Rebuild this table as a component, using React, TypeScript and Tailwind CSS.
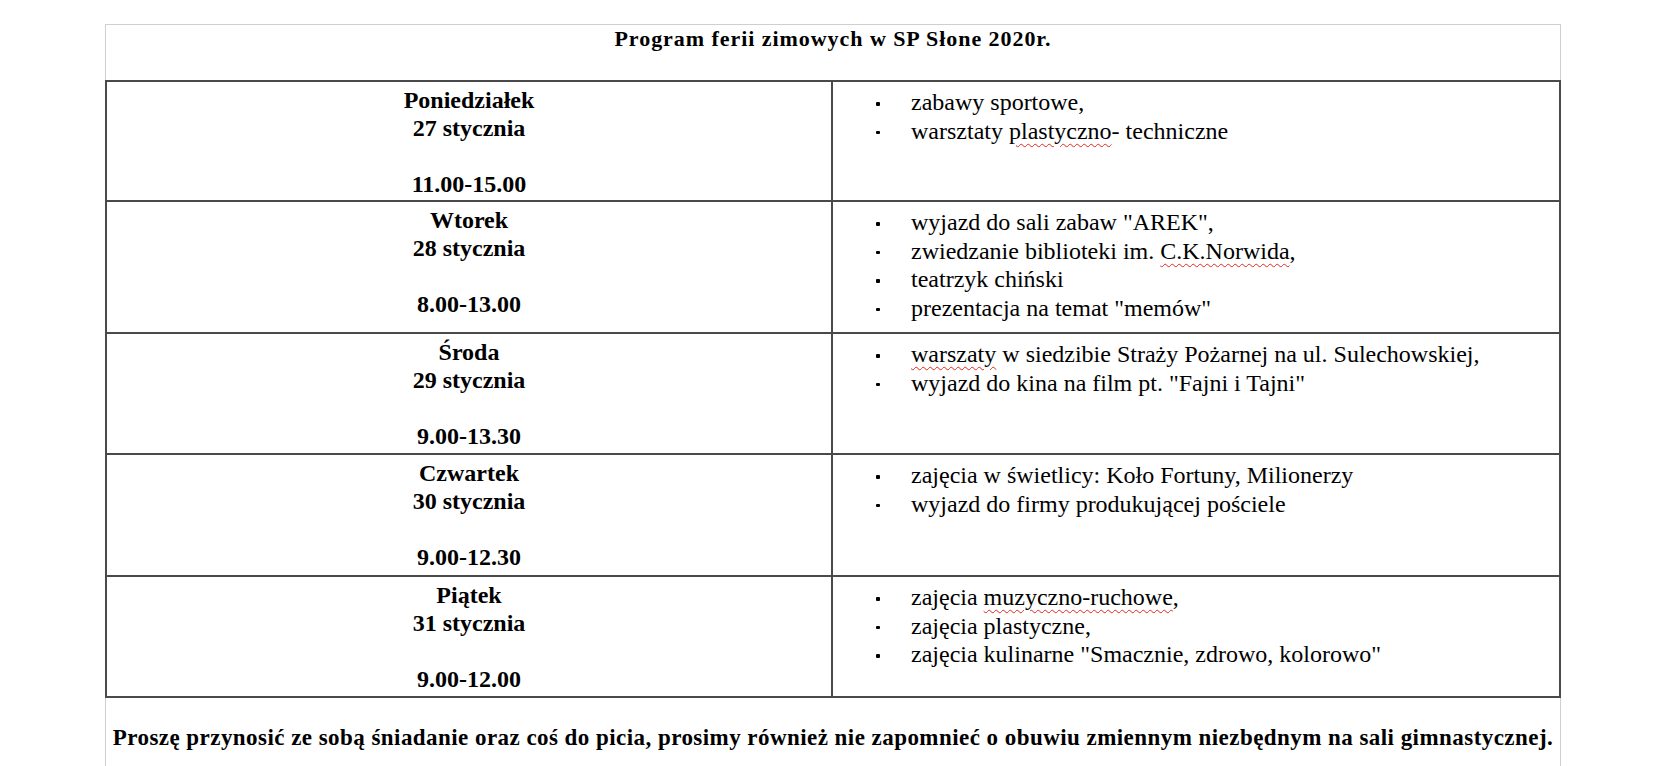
import React from "react";

// red squiggle the word processor draws under words it does not know
const Typo: React.FC<{ children: React.ReactNode }> = ({ children }) => (
  <span className="underline decoration-wavy decoration-[#e3281f] decoration-1 underline-offset-[4px]">
    {children}
  </span>
);

type Day = {
  day: string;
  date: string;
  time: string;
  height: string;
  items: React.ReactNode[];
};

const days: Day[] = [
  {
    day: "Poniedziałek",
    date: "27 stycznia",
    time: "11.00-15.00",
    height: "h-[120px] border-b-2",
    items: [
      "zabawy sportowe,",
      <>
        warsztaty <Typo>plastyczno</Typo>- techniczne
      </>,
    ],
  },
  {
    day: "Wtorek",
    date: "28 stycznia",
    time: "8.00-13.00",
    height: "h-[132px] border-b-2",
    items: [
      'wyjazd do sali zabaw "AREK",',
      <>
        zwiedzanie biblioteki im. <Typo>C.K.Norwida</Typo>,
      </>,
      "teatrzyk chiński",
      'prezentacja na temat "memów"',
    ],
  },
  {
    day: "Środa",
    date: "29 stycznia",
    time: "9.00-13.30",
    height: "h-[121px] border-b-2",
    items: [
      <>
        <Typo>warszaty</Typo> w siedzibie Straży Pożarnej na ul. Sulechowskiej,
      </>,
      'wyjazd do kina na film pt. "Fajni i Tajni"',
    ],
  },
  {
    day: "Czwartek",
    date: "30 stycznia",
    time: "9.00-12.30",
    height: "h-[122px] border-b-2",
    items: [
      "zajęcia w świetlicy: Koło Fortuny, Milionerzy",
      "wyjazd do firmy produkującej pościele",
    ],
  },
  {
    day: "Piątek",
    date: "31 stycznia",
    time: "9.00-12.00",
    height: "h-[119px]",
    items: [
      <>
        zajęcia <Typo>muzyczno-ruchowe</Typo>,
      </>,
      "zajęcia plastyczne,",
      'zajęcia kulinarne "Smacznie, zdrowo, kolorowo"',
    ],
  },
];

const DayRow: React.FC<{ d: Day }> = ({ d }) => (
  <div className={`grid grid-cols-2 border-[#4a4a4a] ${d.height}`}>
    <div className="border-r-2 border-[#4a4a4a] pt-[4px] text-center text-[24px] font-bold leading-[28px]">
      <div>{d.day}</div>
      <div>{d.date}</div>
      <div>&nbsp;</div>
      <div>{d.time}</div>
    </div>
    <ul className="pl-[43px] pt-[6px] text-[24px] leading-[28.6px]">
      {d.items.map((item, i) => (
        <li key={i} className="flex">
          <span className="flex w-[35px] shrink-0 items-start">
            <span className="mt-[14px] h-[3.5px] w-[3.5px] rounded-[1px] bg-black" />
          </span>
          <span>{item}</span>
        </li>
      ))}
    </ul>
  </div>
);

export default function App() {
  return (
    <div className="min-h-screen bg-white pt-[24px] font-['Liberation_Serif','Times_New_Roman',serif] text-black">
      <div className="ml-[105px] w-[1456px] border-x border-t border-[#cfcfcf]">
        <div className="h-[55px] pt-[1px] text-center text-[22px] font-bold leading-[26px] tracking-[0.95px]">
          Program ferii zimowych w SP Słone 2020r.
        </div>
        <div className="-mx-px border-2 border-[#4a4a4a]">
          {days.map((d) => (
            <DayRow key={d.day} d={d} />
          ))}
        </div>
        <div className="h-[70px] pt-[27px] text-center text-[23px] font-bold leading-[26px] tracking-[0.45px]">
          Proszę przynosić ze sobą śniadanie oraz coś do picia, prosimy również nie zapomnieć o obuwiu zmiennym
          niezbędnym na sali gimnastycznej.
        </div>
      </div>
    </div>
  );
}
